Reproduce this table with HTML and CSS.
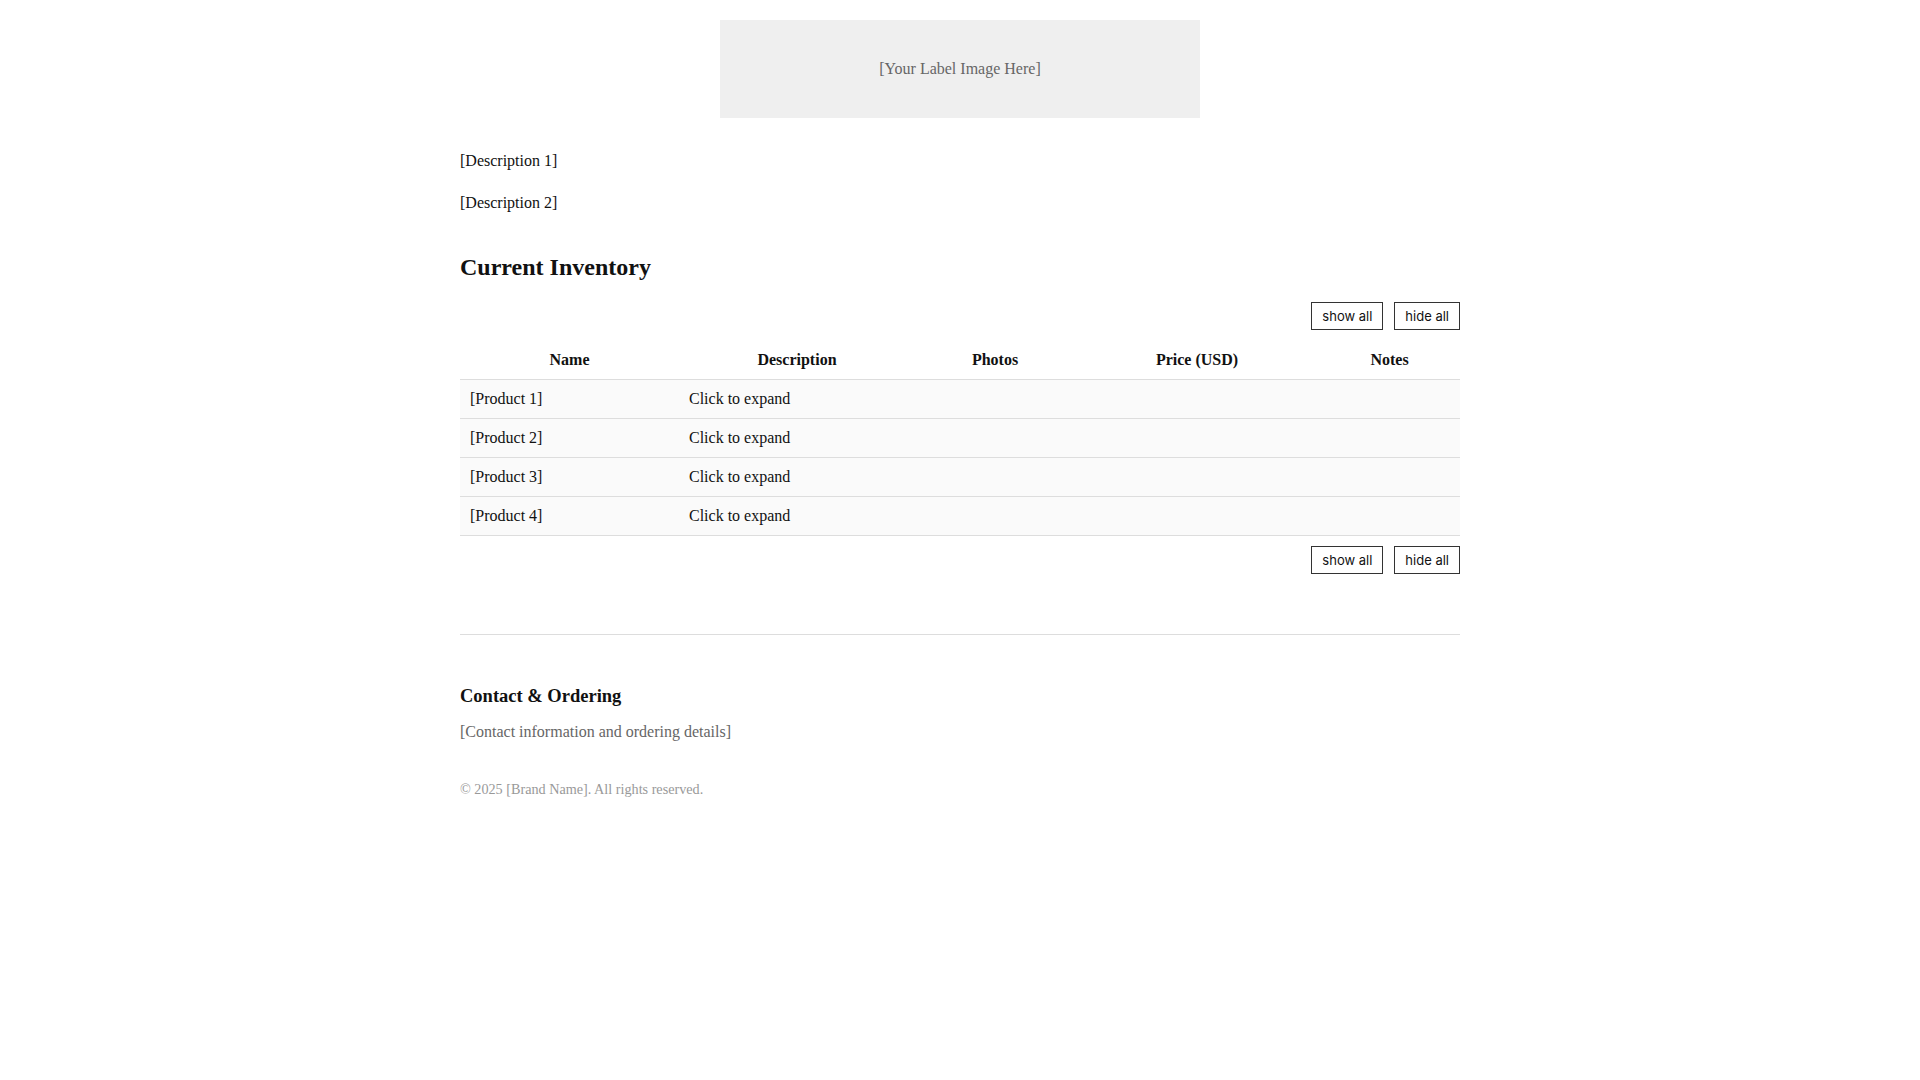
FILE: index.html
```html
<!DOCTYPE html>
<html lang="en">
<head>
<meta charset="utf-8">
<title>Inventory</title>
<link rel="stylesheet" href="styles.css">
</head>
<body>
<div class="page">
  <div class="label-wrap"><div class="label-img">[Your Label Image Here]</div></div>
  <p class="desc">[Description 1]</p>
  <p class="desc">[Description 2]</p>
  <h2 class="section-title">Current Inventory</h2>
  <div class="btn-row top"><button class="btn">show all</button><button class="btn">hide all</button></div>
  <table class="inv">
    <colgroup><col class="c1"><col class="c2"><col class="c3"><col class="c4"><col class="c5"></colgroup>
    <thead><tr><th>Name</th><th>Description</th><th>Photos</th><th>Price (USD)</th><th>Notes</th></tr></thead>
    <tbody>
      <tr><td>[Product 1]</td><td>Click to expand</td><td></td><td></td><td></td></tr>
      <tr><td>[Product 2]</td><td>Click to expand</td><td></td><td></td><td></td></tr>
      <tr><td>[Product 3]</td><td>Click to expand</td><td></td><td></td><td></td></tr>
      <tr><td>[Product 4]</td><td>Click to expand</td><td></td><td></td><td></td></tr>
    </tbody>
  </table>
  <div class="btn-row bottom"><button class="btn">show all</button><button class="btn">hide all</button></div>
  <div class="contact">
    <h3 class="contact-title">Contact &amp; Ordering</h3>
    <p class="contact-text">[Contact information and ordering details]</p>
    <p class="copy">© 2025 [Brand Name]. All rights reserved.</p>
  </div>
</div>
</body>
</html>
```
FILE: styles.css
```css
html, body { margin: 0; padding: 0; background: #fff; }
body {
  font-family: "Liberation Serif", "Times New Roman", serif;
  font-size: 16px;
  color: #111;
  line-height: 1.6;
}
.page { width: 1000px; margin: 0 auto; padding-top: 20px; }
.label-wrap { display: flex; justify-content: center; margin-bottom: 30px; }
.label-img {
  width: 480px;
  height: 98px;
  background: #efefef;
  color: #666;
  display: flex;
  align-items: center;
  justify-content: center;
}
.desc { margin: 0 0 16px; }
.section-title {
  font-size: 24px;
  line-height: 38px;
  margin: 33px 0 16px;
  font-weight: bold;
}
.btn-row { display: flex; justify-content: flex-end; gap: 11px; }
.btn-row.bottom { margin-top: 10px; }
.btn {
  font-family: Inter, "Liberation Sans", sans-serif;
  font-size: 13px;
  line-height: 16px;
  padding: 5px 10px;
  border: 1px solid #333;
  background: #fff;
  color: #111;
  border-radius: 0;
  margin: 0;
}
.inv { width: 1000px; border-collapse: collapse; margin-top: 11px; table-layout: fixed; }
.c1 { width: 219px; } .c2 { width: 236px; } .c3 { width: 160px; } .c4 { width: 244px; } .c5 { width: 141px; }
.inv th {
  font-weight: bold;
  text-align: center;
  padding: 0 10px;
  height: 38px;
  line-height: 38px;
  border-bottom: 1px solid #ddd;
}
.inv td {
  padding: 0 10px;
  height: 38px;
  line-height: 38px;
  background: #fafafa;
  border-bottom: 1px solid #ddd;
  text-align: left;
}
.contact { margin-top: 60px; border-top: 1px solid #ddd; padding-top: 46px; }
.contact-title { font-size: 18.5px; line-height: 30px; margin: 0 0 8px; font-weight: bold; }
.contact-text { margin: 0 0 33px; color: #666; }
.copy { margin: 0; font-size: 14.2px; color: #999; }
```
